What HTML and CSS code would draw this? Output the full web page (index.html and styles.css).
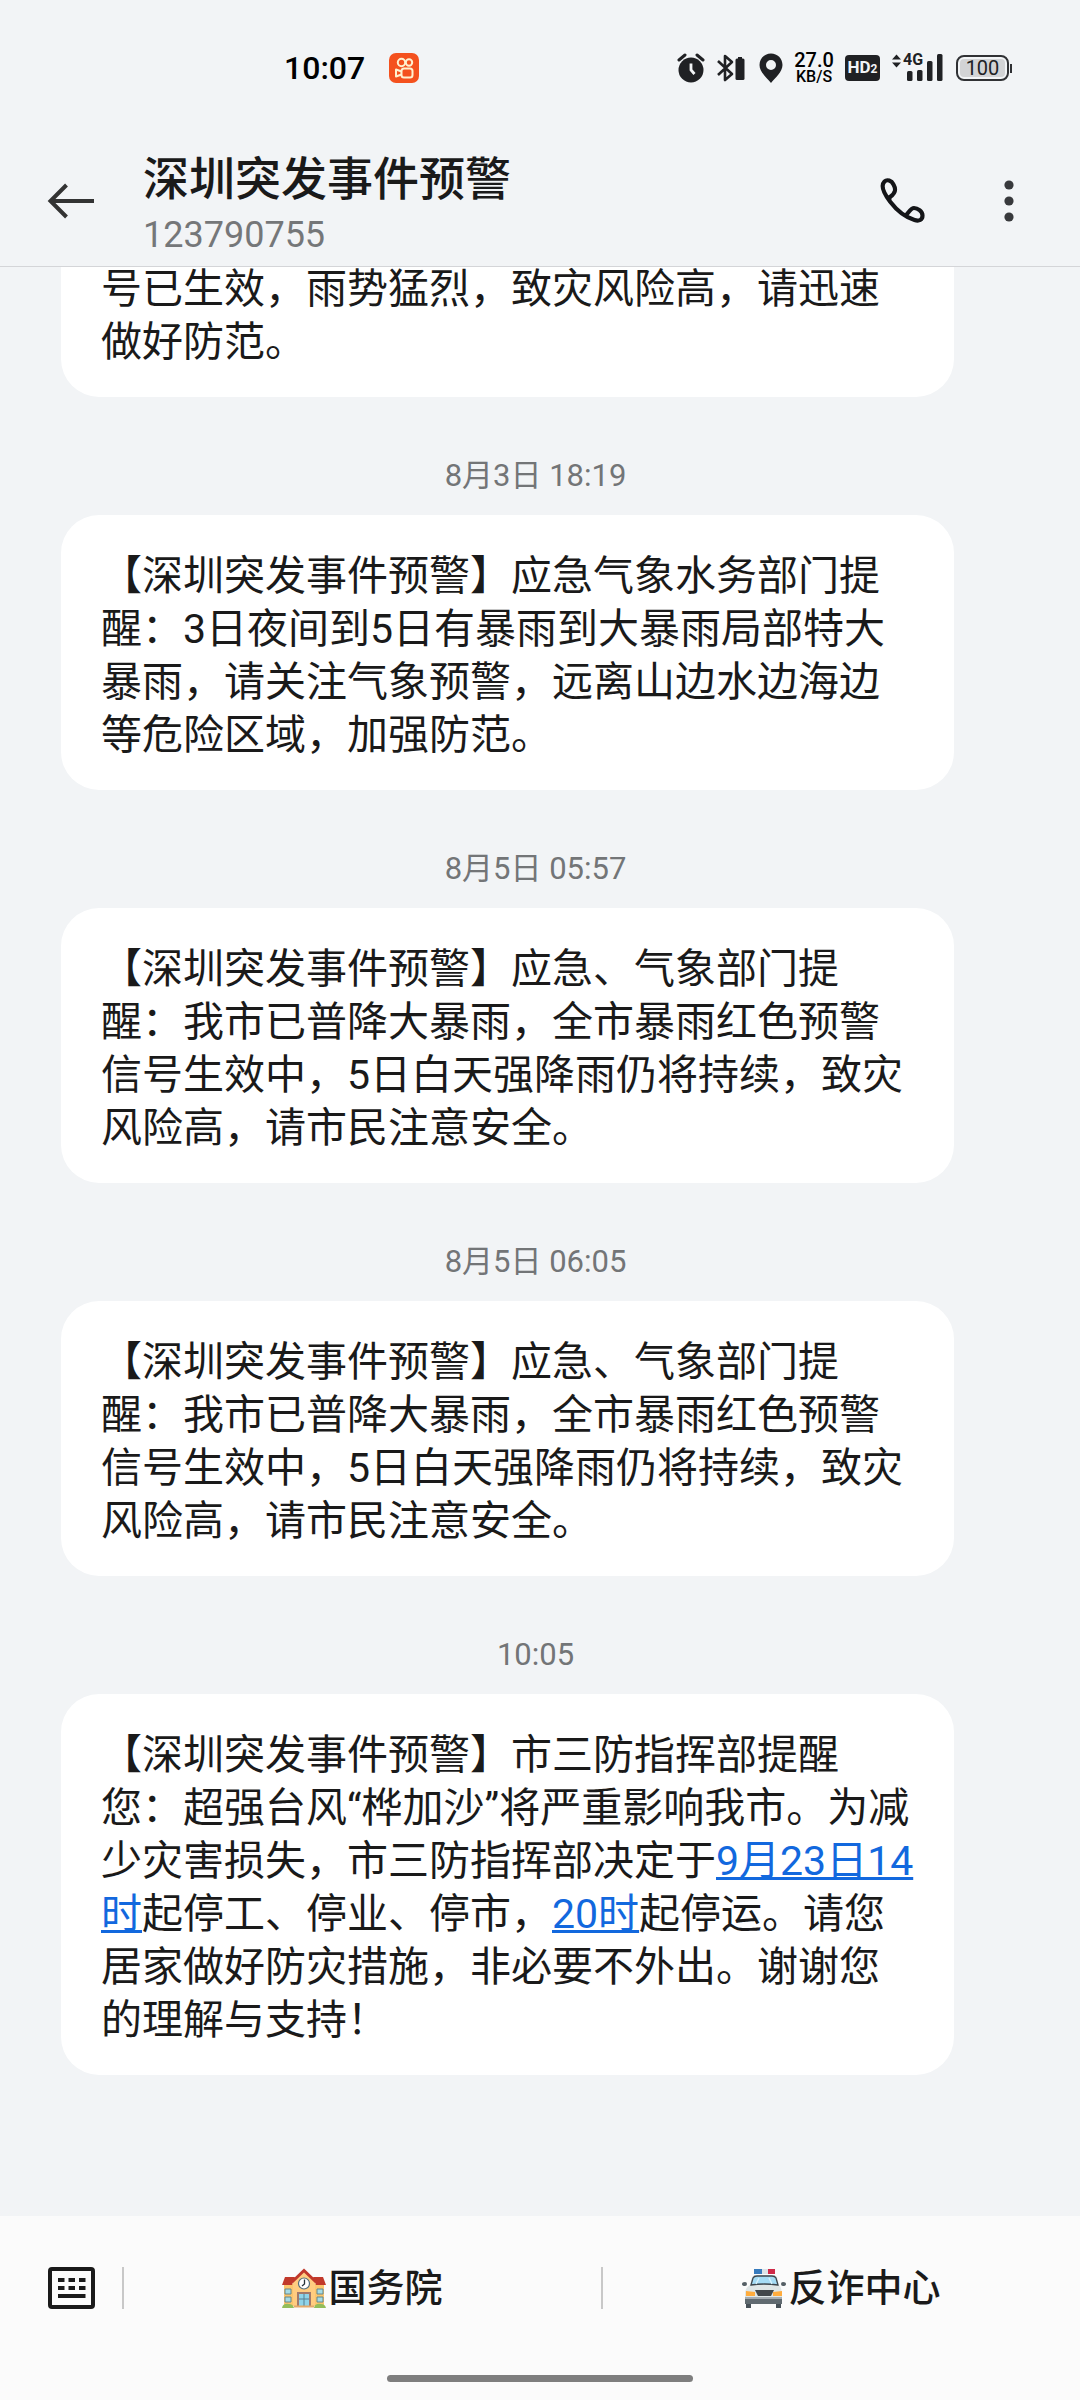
FILE: index.html
```html
<!DOCTYPE html>
<html lang="zh-CN">
<head>
<meta charset="utf-8">
<meta name="viewport" content="width=device-width, initial-scale=1">
<title>深圳突发事件预警</title>
<link rel="stylesheet" href="styles.css">
</head>
<body>
<div class="status-bar">
  <div class="status-left">
    <span class="clock">10:07</span>
    <svg width="30" height="30" viewBox="0 0 30 30" aria-hidden="true">
      <rect width="30" height="30" rx="7" fill="#f4511e"/>
      <g fill="none" stroke="#fff1cf" stroke-width="2">
        <circle cx="12.500" cy="9.500" r="3.700"/>
        <circle cx="20" cy="9.500" r="3.200"/>
        <rect x="12.500" y="15.500" width="11" height="9" rx="2.500"/>
        <path d="M12.500 18.500L7 16.500V23.500L12.500 21.500" stroke-linejoin="round"/>
      </g>
    </svg>
  </div>
  <div class="status-right">
    <svg width="28" height="30" viewBox="0 0 28 30" aria-hidden="true">
      <circle cx="14" cy="17" r="12.500" fill="#202124"/>
      <path d="M2 7L8 2M26 7L20 2" stroke="#202124" stroke-width="3" stroke-linecap="round"/>
      <path d="M14 10.500V17L17.500 21" fill="none" stroke="#f2f4f6" stroke-width="2.800"/>
    </svg>
    <svg width="30" height="30" viewBox="0 0 30 30" aria-hidden="true">
      <path d="M1 8L15 21L8 27V3L15 9L1 22" fill="none" stroke="#202124" stroke-width="2.600" stroke-linejoin="round"/>
      <path d="M21 4h4v2h-4z" fill="#202124"/>
      <rect x="18.500" y="5.500" width="9" height="21.500" rx="1.500" fill="#202124"/>
    </svg>
    <svg width="24" height="30" viewBox="0 0 24 30" aria-hidden="true">
      <path fill-rule="evenodd" d="M12 0.500C5.500 0.500 0.500 5.500 0.500 12C0.500 19 8 25 12 30C16 25 23.500 19 23.500 12C23.500 5.500 18.500 0.500 12 0.500ZM12 7a5 5 0 1 1 0 10a5 5 0 0 1 0-10Z" fill="#202124"/>
    </svg>
    <div class="net-speed"><span class="net-value">27.0</span><span class="net-unit">KB/S</span></div>
    <div class="hd">HD<small>2</small></div>
    <div class="signal">
      <svg width="52" height="30" viewBox="0 0 52 30" aria-hidden="true">
        <path d="M0 6.500L4.500 1.500L9 6.500ZM0 9.500L4.500 14.500L9 9.500Z" fill="#202124"/>
        <g fill="#202124">
          <rect x="15" y="18" width="5.500" height="10" rx="1.500"/>
          <rect x="25" y="17" width="5.500" height="11" rx="1.500"/>
          <rect x="35" y="8" width="5.500" height="20" rx="1.500"/>
          <rect x="45" y="1" width="5.500" height="27" rx="1.500"/>
        </g>
      </svg>
      <span class="signal-type">4G</span>
    </div>
    <div class="battery"><span class="battery-level">100</span></div>
  </div>
</div>

<header class="header">
  <button class="icon-button" type="button" aria-label="返回">
    <svg width="48" height="48" viewBox="0 0 48 48">
      <path d="M19.500 8L3.500 24L19.500 40M3.500 24H47" fill="none" stroke="#333" stroke-width="4"/>
    </svg>
  </button>
  <div class="contact">
    <h1 class="contact-name">深圳突发事件预警</h1>
    <p class="contact-number">123790755</p>
  </div>
  <button class="icon-button" type="button" aria-label="拨打电话">
    <svg width="48" height="48" viewBox="0 0 48 48">
      <path d="M12 20C18 16 18 12 15.500 7.500C13.500 3.500 9 2 6.500 4.500C3.500 7.500 4 14 12 24.500C20 35 30 41 36.500 43C41 44.500 44.500 43 44.500 38.500C44.500 34 39.500 31 36 31C33.500 31 31.500 34 29 37M12 20Q11 22 11.500 23.500" fill="none" stroke="#141518" stroke-width="4.200" stroke-linejoin="round" stroke-linecap="round"/>
    </svg>
  </button>
  <button class="icon-button" type="button" aria-label="更多">
    <svg width="48" height="48" viewBox="0 0 48 48" fill="#38393c">
      <circle cx="24" cy="8" r="4.600"/><circle cx="24" cy="24" r="4.600"/><circle cx="24" cy="40" r="4.600"/>
    </svg>
  </button>
</header>

<main class="messages">
  <p class="bubble">号已生效，雨势猛烈，致灾风险高，请迅速做好防范。</p>
  <time class="stamp">8月3日 18:19</time>
  <p class="bubble">【深圳突发事件预警】应急气象水务部门提醒：3日夜间到5日有暴雨到大暴雨局部特大暴雨，请关注气象预警，远离山边水边海边等危险区域，加强防范。</p>
  <time class="stamp">8月5日 05:57</time>
  <p class="bubble">【深圳突发事件预警】应急、气象部门提醒：我市已普降大暴雨，全市暴雨红色预警信号生效中，5日白天强降雨仍将持续，致灾风险高，请市民注意安全。</p>
  <time class="stamp">8月5日 06:05</time>
  <p class="bubble">【深圳突发事件预警】应急、气象部门提醒：我市已普降大暴雨，全市暴雨红色预警信号生效中，5日白天强降雨仍将持续，致灾风险高，请市民注意安全。</p>
  <time class="stamp">10:05</time>
  <p class="bubble">【深圳突发事件预警】市三防指挥部提醒您：超强台风“桦加沙”将严重影响我市。为减少灾害损失，市三防指挥部决定于<a href="#">9月23日14时</a>起停工、停业、停市，<a href="#">20时</a>起停运。请您居家做好防灾措施，非必要不外出。谢谢您的理解与支持！</p>
</main>

<footer class="footer">
  <nav class="menu">
    <button class="keyboard-button" type="button" aria-label="键盘">
      <svg width="48" height="42" viewBox="0 0 48 42">
        <rect x="2" y="2" width="43" height="38" rx="2" fill="none" stroke="#1a1a1a" stroke-width="4"/>
        <path d="M10 13h6.500M20.500 13h6.500M31 13h6.500M10 21h6.500M20.500 21h6.500M31 21h6.500M10 29h27.500" stroke="#1a1a1a" stroke-width="4"/>
      </svg>
    </button>
    <button class="menu-item" type="button">
      <svg width="44" height="40" viewBox="0 0 44 40" aria-hidden="true">
        <path d="M2 16H42V38H2Z" fill="#fbc56d"/>
        <path d="M3 9H13L10 17H0ZM31 9H41L44 17H34Z" fill="#c1392b"/>
        <path d="M11 13L22 3L33 13V38H11Z" fill="#ffcc80"/>
        <path d="M10 14L22 2.500L34 14" fill="none" stroke="#c1392b" stroke-width="3"/>
        <circle cx="22" cy="15.500" r="5.500" fill="#fff" stroke="#546e7a" stroke-width="1.200"/>
        <path d="M22.500 11.500V16L20 18" fill="none" stroke="#263238" stroke-width="1.300"/>
        <path d="M15 24H29V38H15Z" fill="#a1796b"/>
        <path d="M17 26H27V38H17Z" fill="#8fd3e8"/>
        <path d="M22 26V38M17 31H27" stroke="#547f91"/>
        <path d="M3 21h6v5H3zM3 29h6v5H3zM35 21h6v5h-6zM35 29h6v5h-6z" fill="#a5dbe5" stroke="#65868b"/>
        <path d="M0 40Q1 35 7 36Q11 36 12 40ZM32 40Q33 35 39 36Q43 36 44 40Z" fill="#93bd5a"/>
        <path d="M12 38.500H32" stroke="#e5a968" stroke-width="2"/>
      </svg>
      <span>国务院</span>
    </button>
    <button class="menu-item" type="button">
      <svg width="44" height="40" viewBox="0 0 44 40" aria-hidden="true">
        <path d="M12 1h9v5h-9z" fill="#377bbd"/><path d="M20 1h7v5h-7z" fill="#dce3e7"/><path d="M26 1h7v5h-7z" fill="#cf2948"/>
        <path d="M4 31H9V40H4ZM34 31H39V40H34Z" fill="#465057"/>
        <path d="M0 16Q0 14 3 14Q5 14 5 16Q5 18 3 18Q0 18 0 16ZM39 16Q39 14 41 14Q44 14 44 16Q44 18 41 18Q39 18 39 16Z" fill="#555f65"/>
        <path d="M3 26Q3 20 8 17L10 9Q11 7 14 7H30Q34 7 35 9L37 17Q40 20 40 26V35H3Z" fill="#dfe6e6"/>
        <path d="M9 17L11 10Q12 8 15 8H30Q33 8 34 10L36 17Q22 15 9 17Z" fill="#a5dcf5" stroke="#3d464c" stroke-width="1.300"/>
        <path d="M14 16L17 10M27 10L30 16" stroke="#d6f1fb" stroke-width="1.500"/>
        <path d="M13 22H32L29 28H16Z" fill="#42474a"/>
        <path d="M4 23L13 24V28H4ZM40 23L31 24V28H40Z" fill="#ffac3d"/>
        <path d="M3 29H40V36H3Z" fill="#606a70"/>
        <path d="M3 29H40V31H3Z" fill="#a6adb1"/>
      </svg>
      <span>反诈中心</span>
    </button>
  </nav>
  <div class="home-indicator"></div>
</footer>
</body>
</html>
```
FILE: styles.css
```css
* {
  box-sizing: border-box;
}

body {
  display: flex;
  flex-direction: column;
  height: 100vh;
  margin: 0;
  background: #f2f4f6;
  color: #1a1a1a;
  font-family: Roboto, "Noto Sans CJK SC", sans-serif;
  text-spacing-trim: space-all;
}

button {
  padding: 0;
  border: 0;
  background: none;
  color: inherit;
  font: inherit;
}

svg {
  display: block;
  flex: none;
}

/* Status bar */
.status-bar {
  display: flex;
  flex: none;
  align-items: center;
  justify-content: space-between;
  height: 136px;
  padding: 0 71px 0 284px;
  color: #000;
}

.status-left {
  display: flex;
  align-items: center;
  gap: 24px;
}

.clock {
  font-size: 32px;
  font-weight: 500;
  line-height: 40px;
}

.status-right {
  display: flex;
  align-items: center;
  gap: 12px;
}

.net-speed {
  display: flex;
  flex-direction: column;
  align-items: center;
  width: 38px;
  font-weight: 500;
}

.net-value {
  font-size: 20px;
  line-height: 17px;
}

.net-unit {
  font-size: 16px;
  line-height: 15px;
}

.hd {
  width: 35px;
  border-radius: 4px;
  background: #202124;
  color: #f2f4f6;
  font-size: 17px;
  font-weight: 700;
  line-height: 24px;
  text-align: center;
}

.hd small {
  font-size: 12px;
}

.signal {
  position: relative;
}

.signal-type {
  position: absolute;
  top: -1px;
  left: 11px;
  background: #f2f4f6;
  color: #202124;
  font-size: 16px;
  font-weight: 700;
  line-height: 16px;
}

.battery {
  position: relative;
  width: 53px;
  padding: 2px;
  border: 2px solid #303134;
  border-radius: 8px;
}

.battery::after {
  position: absolute;
  top: 7px;
  right: -5px;
  width: 2px;
  height: 9px;
  background: #303134;
  content: "";
}

.battery-level {
  display: block;
  border-radius: 4px;
  background: #d2d3d5;
  color: #202124;
  font-size: 20px;
  line-height: 18px;
  text-align: center;
}

/* Conversation header */
.header {
  display: flex;
  flex: none;
  align-items: center;
  height: 131px;
  padding: 0 47px;
  border-bottom: 1px solid #d4d5d8;
}

.contact {
  flex: 1;
  padding: 8px 0 0 48px;
}

.contact-name {
  margin: 0;
  font-size: 46px;
  font-weight: 500;
  line-height: 60px;
}

.contact-number {
  margin: 0;
  color: #757779;
  font-size: 36px;
  line-height: 52px;
}

.icon-button + .icon-button {
  margin-left: 59px;
}

/* Messages */
.messages {
  display: flex;
  flex: 1;
  flex-direction: column;
  justify-content: flex-end;
  min-height: 0;
  overflow: hidden;
  padding: 0 70px 141px 61px;
}

.bubble {
  flex: none;
  margin: 0 56px 0 0;
  padding: 35px 40px 28px;
  border-radius: 38px;
  background: #fff;
  font-size: 41px;
  line-height: 53px;
}

.bubble a {
  color: #1268de;
  text-decoration-thickness: 3px;
}

.stamp {
  flex: none;
  padding: 59px 0 19px;
  color: #737577;
  font-size: 31px;
  line-height: 40px;
  text-align: center;
}

/* Quick menu */
.footer {
  flex: none;
  background: #fbfbfb;
}

.menu {
  display: flex;
  align-items: center;
  height: 143px;
}

.keyboard-button {
  padding: 0 26px 0 48px;
}

.menu-item {
  display: flex;
  flex: 1;
  align-items: center;
  justify-content: center;
  gap: 2px;
  height: 42px;
  border-left: 2px solid #c8c8c8;
  font-size: 38px;
  font-weight: 500;
  line-height: 42px;
}

.home-indicator {
  width: 306px;
  height: 7px;
  margin: 16px auto 18px;
  border-radius: 4px;
  background: #7e7e7e;
}
```
